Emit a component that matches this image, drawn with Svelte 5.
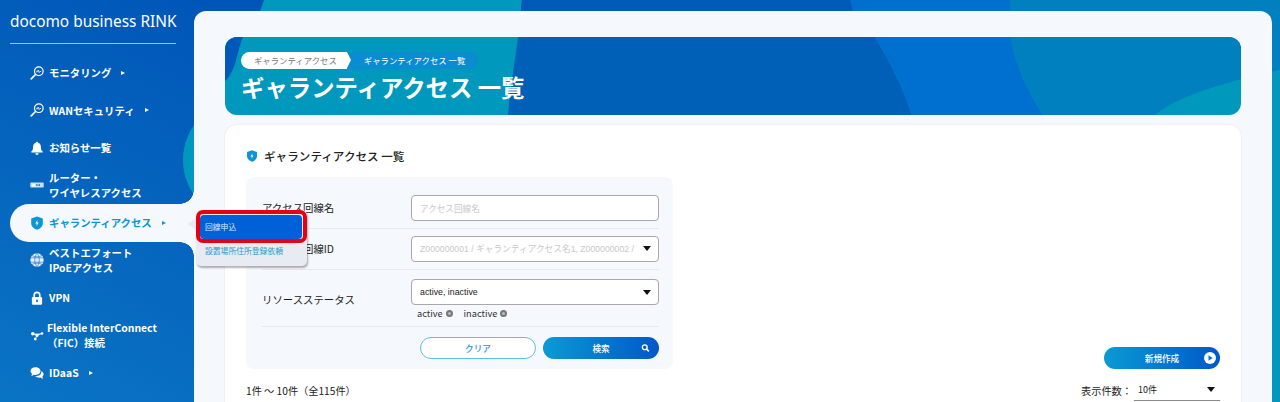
<script>
  const nav = [
    { id: 'monitor', lines: ['モニタリング'], arrow: true },
    { id: 'monitor', lines: ['WANセキュリティ'], arrow: true },
    { id: 'bell', lines: ['お知らせ一覧'] },
    { id: 'router', lines: ['ルーター・', 'ワイヤレスアクセス'] },
    { id: 'shield', lines: ['ギャランティアクセス'], arrow: true, active: true },
    { id: 'globe', lines: ['ベストエフォート', 'IPoEアクセス'] },
    { id: 'lock', lines: ['VPN'] },
    { id: 'network', lines: ['Flexible InterConnect', '（FIC）接続'], tight: true },
    { id: 'chat', lines: ['IDaaS'], arrow: true }
  ]
</script>

{#snippet icon(id)}
  <svg class="nav-icon" viewBox="0 0 14 14" fill="currentColor">
    {#if id === 'monitor'}
      <circle cx="8.800" cy="5.200" r="4.300" fill="none" stroke="currentColor" stroke-width="1.200" />
      <path d="M5.500 8.500 1.200 12.800" fill="none" stroke="currentColor" stroke-width="1.700" stroke-linecap="round" />
      <path d="M6 5.800h1.400l.8-1.800 1 2.600.7-1.100h1.200" fill="none" stroke="currentColor" stroke-width=".8" />
    {:else if id === 'bell'}
      <path d="M7 .8c.6 0 1 .4 1 1 2 .5 2.900 2.200 2.900 4.200 0 2.400.6 3.500 1.800 4.500v.9H1.300v-.9c1.200-1 1.800-2.100 1.800-4.500 0-2 .9-3.700 2.900-4.200 0-.6.4-1 1-1z" />
      <path d="M5.300 12.200h3.400a1.700 1.700 0 0 1-3.400 0z" />
    {:else if id === 'router'}
      <rect x=".3" y="4.600" width="13.400" height="5" rx=".8" opacity=".8" />
      <rect x="2" y="5.800" width="3.400" height="2.600" fill="#fff" />
      <rect x="6.200" y="6.300" width="1.400" height="1.500" fill="#0a62b8" />
      <rect x="8.600" y="6.300" width="1.400" height="1.500" fill="#0a62b8" />
    {:else if id === 'shield'}
      <path d="M7 .4 12.800 2.400v5c0 3-2.500 5.200-5.800 6.300C3.700 12.600 1.200 10.400 1.200 7.400v-5z" />
      <path d="M7.500 3.800 5.300 7.500h1.500l-.4 2.700 2.300-3.700H7.100z" fill="#fff" />
    {:else if id === 'globe'}
      <circle cx="7" cy="7" r="6.700" opacity=".9" />
      <path d="M.6 4.800h12.800M.6 9.200h12.800M7 .4c-3 3-3 10 0 13.200M7 .4c3 3 3 10 0 13.200M2 2.500c3 1.800 7 1.800 10 0M2 11.500c3-1.800 7-1.800 10 0" fill="none" stroke="#0a66b8" stroke-width=".6" />
    {:else if id === 'lock'}
      <path d="M4.200 6.500V4.200a2.800 2.800 0 0 1 5.600 0v2.300" fill="none" stroke="currentColor" stroke-width="1.600" />
      <rect x="1.900" y="6" width="10.200" height="7.800" rx="1.200" />
      <rect x="6.200" y="8.400" width="1.600" height="3" rx=".8" fill="#0a66b8" />
    {:else if id === 'network'}
      <circle cx="2.800" cy="5.800" r="1.800" />
      <circle cx="7" cy="7.500" r="1.500" />
      <circle cx="12" cy="5.500" r="1.300" />
      <circle cx="5.300" cy="11" r="1.400" />
      <path d="M3 5.800 7 7.500 12 5.500M7 7.500 5.300 11" stroke="currentColor" stroke-width=".7" />
    {:else if id === 'chat'}
      <path d="M5.500 1.300c2.800 0 5 1.700 5 3.800s-2.200 3.800-5 3.800c-.6 0-1.100-.1-1.600-.2L1.400 10.300l.6-2.500C1.100 7 .5 6.100.5 5.100.5 3 2.700 1.300 5.500 1.300z" />
      <path d="M11.300 5.200c1.400.6 2.300 1.700 2.300 3 0 .9-.5 1.800-1.300 2.400l.6 2.500-2.500-1.500c-2 .4-4.100-.2-5.100-1.500 3.200.2 6.300-1.500 6-4.900z" />
    {/if}
  </svg>
{/snippet}

<div class="page">
  <svg class="backdrop" viewBox="0 0 1280 402" preserveAspectRatio="none">
    <defs>
      <linearGradient id="bgBlue" gradientUnits="userSpaceOnUse" x1="200" y1="0" x2="0" y2="402">
        <stop offset="0" stop-color="#0056b8" />
        <stop offset="1" stop-color="#0a74c4" />
      </linearGradient>
    </defs>
    <rect width="1280" height="402" fill="url(#bgBlue)" />
    <ellipse cx="232" cy="160" rx="49" ry="55" fill="#0098bc" />
    <path d="M264 0H522L518 40H250z" fill="#0098bc" />
    <path d="M522 0H850L860 40H518z" fill="#005ab8" />
    <path d="M850 0H1010V40H860z" fill="#0070d0" />
    <path d="M1010 0H1280V72L1240 80V40H1010z" fill="#0080be" />
    <path d="M1240 78 1280 70V402H1240z" fill="#0098bc" />
  </svg>

  <aside class="sidebar">
    <div class="brand">docomo business RINK</div>
    <nav class="nav">
      {#each nav as item}
        <div class="nav-item" class:active={item.active} class:tight={item.tight}>
          {@render icon(item.id)}
          <span class="nav-text">
            {#each item.lines as line}
              <span>{line}</span>
            {/each}
          </span>
          {#if item.arrow}<i class="nav-arrow"></i>{/if}
        </div>
      {/each}
    </nav>
  </aside>

  <main class="panel">
    <header class="banner">
      <svg class="banner-art" viewBox="0 0 1016 78" preserveAspectRatio="none">
        <rect width="1016" height="78" fill="#0098bc" />
        <path d="M0 0h18C12 14 12 26 6 36 4 40 2 42 0 44z" fill="#0058b8" />
        <path d="M293 0H650C665 25 678 50 687 78H283C285 50 290 25 293 0z" fill="#0060b8" />
        <path d="M650 0H786C790 30 805 58 818 78H687C678 50 665 25 650 0z" fill="#0070d0" />
        <path d="M786 0H1016V42C990 50 955 58 930 78H818C805 58 790 30 786 0z" fill="#0080be" />
      </svg>
      <div class="crumbs">
        <span class="crumb first">ギャランティアクセス</span>
        <span class="crumb second">ギャランティアクセス 一覧</span>
      </div>
      <h1>ギャランティアクセス 一覧</h1>
    </header>

    <section class="card">
      <h2>
        <svg class="head-icon" viewBox="0 0 14 14">
          <path d="M7 .4 12.800 2.400v5c0 3-2.500 5.200-5.800 6.300C3.700 12.600 1.200 10.400 1.200 7.400v-5z" fill="#0a96d4" />
          <path d="M7.500 3.800 5.300 7.500h1.500l-.4 2.700 2.300-3.700H7.100z" fill="#fff" />
        </svg>
        ギャランティアクセス 一覧
      </h2>

      <div class="actions-row">
        <form class="search">
          <div class="row">
            <span class="label">アクセス回線名</span>
            <div class="control"><div class="input placeholder">アクセス回線名</div></div>
          </div>
          <div class="row">
            <span class="label">アクセス回線ID</span>
            <div class="control">
              <div class="input select placeholder latin">
                <span class="clip">Z000000001 / ギャランティアクセス名1, Z000000002 / :</span>
                <i class="caret"></i>
              </div>
            </div>
          </div>
          <div class="row tall">
            <span class="label">リソースステータス</span>
            <div class="control">
              <div class="input select latin value"><span class="clip">active, inactive</span><i class="caret"></i></div>
              <div class="tags">
                <span class="tag">active <i class="x"></i></span>
                <span class="tag">inactive <i class="x"></i></span>
              </div>
            </div>
          </div>
          <div class="buttons">
            <button type="button" class="btn ghost">クリア</button>
            <button type="button" class="btn primary">
              検索
              <svg class="btn-icon search-icon" viewBox="0 0 12 12" fill="none" stroke="#fff">
                <circle cx="5" cy="5" r="3.200" stroke-width="1.800" />
                <path d="M7.500 7.500 10.500 10.500" stroke-width="2" />
              </svg>
            </button>
          </div>
        </form>
        <button type="button" class="btn primary create">
          新規作成
          <svg class="btn-icon play-icon" viewBox="0 0 12 12">
            <circle cx="6" cy="6" r="6" fill="#fff" />
            <path d="M4.500 3.300 8.700 6 4.500 8.700z" fill="#0a70d0" />
          </svg>
        </button>
      </div>

      <div class="list-meta">
        <span>1件 〜 10件（全115件）</span>
        <div class="per-page">
          <span>表示件数：</span>
          <div class="per-select">10件<i class="caret"></i></div>
        </div>
      </div>
    </section>
  </main>

  <div class="popover">
    <a class="pop-item current" href="#apply">回線申込</a>
    <a class="pop-item" href="#address">設置場所住所登録依頼</a>
    <div class="highlight"></div>
  </div>
</div>

<style>
  :global(body) {
    margin: 0;
  }

  .page {
    position: relative;
    display: flex;
    height: 402px;
    overflow: hidden;
    font-family: "Noto Sans CJK JP", "Noto Sans", sans-serif;
    color: #222;
  }

  .backdrop {
    position: absolute;
    inset: 0;
    width: 100%;
    height: 100%;
  }

  .sidebar {
    position: relative;
    flex: 0 0 194px;
    width: 194px;
    min-width: 0;
    color: #fff;
  }

  .brand {
    margin: 0 18px 0 10px;
    height: 32px;
    padding-top: 11px;
    border-bottom: 1px solid #9cc4ea;
    font-family: "Noto Sans", sans-serif;
    font-size: 15.4px;
    line-height: 22px;
    white-space: nowrap;
  }

  .nav {
    margin-top: 10px;
  }

  .nav-item {
    position: relative;
    display: flex;
    align-items: center;
    gap: 5px;
    height: 37.5px;
    padding-left: 30px;
    font-size: 10.4px;
    font-weight: 700;
    line-height: 15px;
  }

  .nav-item.tight {
    gap: 3px;
  }

  .nav-item.active {
    margin-left: 10px;
    padding-left: 20px;
    background: #f5f8fc;
    border-radius: 19px 0 0 19px;
    color: #0a96d4;
  }

  .nav-item.active::before,
  .nav-item.active::after {
    content: "";
    position: absolute;
    right: 0;
    width: 14px;
    height: 14px;
  }

  .nav-item.active::before {
    top: -14px;
    background: radial-gradient(circle at 0 0, transparent 13.5px, #f5f8fc 14px);
  }

  .nav-item.active::after {
    bottom: -14px;
    background: radial-gradient(circle at 0 100%, transparent 13.5px, #f5f8fc 14px);
  }

  .nav-icon {
    flex: 0 0 14px;
    width: 14px;
    height: 14px;
  }

  .nav-text span {
    display: block;
    white-space: nowrap;
  }

  .nav-arrow {
    width: 0;
    height: 0;
    margin-left: 5px;
    border-left: 4px solid currentColor;
    border-top: 2.5px solid transparent;
    border-bottom: 2.5px solid transparent;
  }

  .panel {
    position: relative;
    flex: 1;
    margin: 11px 8px 0 0;
    padding: 26px 31px;
    min-width: 0;
    background: #f5f8fc;
    border-radius: 12px 12px 0 0;
  }

  .banner {
    position: relative;
    height: 78px;
    padding: 15px 16px 0;
    box-sizing: border-box;
    border-radius: 12px;
    overflow: hidden;
  }

  .banner-art {
    position: absolute;
    inset: 0;
    width: 100%;
    height: 100%;
  }

  .crumbs {
    position: relative;
    display: flex;
    font-size: 8.4px;
    line-height: 17px;
  }

  .crumb {
    height: 17px;
    white-space: nowrap;
  }

  .crumb.first {
    position: relative;
    z-index: 1;
    padding: 0 10px 0 13px;
    background: #fff;
    border-radius: 9px 0 0 9px;
    color: #777;
  }

  .crumb.first::after {
    content: "";
    position: absolute;
    left: 100%;
    top: 0;
    border-left: 4px solid #fff;
    border-top: 8.5px solid transparent;
    border-bottom: 8.5px solid transparent;
  }

  .crumb.second {
    padding: 0 13px 0 17px;
    background: #0a8cd0;
    border-radius: 0 9px 9px 0;
    color: #fff;
  }

  h1 {
    position: relative;
    margin: 0;
    font-size: 23.4px;
    font-weight: 700;
    line-height: 36px;
    color: #fff;
    white-space: nowrap;
  }

  .card {
    margin-top: 10px;
    padding: 21px 21px 0;
    height: 300px;
    background: #fff;
    border-radius: 12px;
    box-shadow: 0 0 2px rgba(120, 140, 170, 0.2);
  }

  h2 {
    display: flex;
    align-items: center;
    gap: 6px;
    margin: 0;
    height: 20px;
    font-size: 11.6px;
    font-weight: 500;
    color: #222;
  }

  .head-icon {
    width: 12px;
    height: 14px;
  }

  .actions-row {
    display: flex;
    align-items: flex-end;
    justify-content: space-between;
    margin-top: 11px;
  }

  .search {
    width: 427px;
    box-sizing: border-box;
    padding: 10.5px 14px 10px 16px;
    background: #f5f8fc;
    border-radius: 8px;
  }

  .row {
    display: flex;
    align-items: center;
    height: 41.25px;
    border-bottom: 1px solid #e6eaef;
    box-sizing: border-box;
  }

  .row.tall {
    height: 57px;
    align-items: flex-start;
    padding-top: 9px;
  }

  .row.tall .label {
    align-self: center;
    margin-top: -6px;
  }

  .label {
    flex: 0 0 149px;
    font-size: 10.4px;
    font-weight: 400;
    white-space: nowrap;
  }

  .control {
    flex: 1;
    min-width: 0;
  }

  .input {
    display: flex;
    align-items: center;
    height: 26px;
    box-sizing: border-box;
    padding: 0 7px 0 8px;
    background: #fff;
    border: 1px solid #a8a8a8;
    border-radius: 4px;
    font-size: 8.6px;
  }

  .input.latin {
    font-family: "Liberation Sans", "Noto Sans CJK JP", sans-serif;
    font-size: 8.7px;
  }

  .input.value {
    color: #222;
    font-size: 8.8px;
  }

  .placeholder {
    color: #c8c8c8;
  }

  .clip {
    flex: 1;
    min-width: 0;
    overflow: hidden;
    white-space: nowrap;
  }

  .caret {
    flex: none;
    width: 0;
    height: 0;
    margin-left: 8px;
    border-top: 5px solid #111;
    border-left: 4px solid transparent;
    border-right: 4px solid transparent;
  }

  .tags {
    display: flex;
    gap: 11px;
    padding: 1px 0 0 6px;
    font-size: 9.2px;
    line-height: 14px;
  }

  .tag {
    display: flex;
    align-items: center;
    gap: 3px;
    color: #333;
  }

  .x {
    position: relative;
    width: 7px;
    height: 7px;
    border-radius: 50%;
    background: #777;
  }

  .x::after {
    content: "";
    position: absolute;
    inset: 2px;
    border-radius: 50%;
    background: #bbb;
  }

  .buttons {
    display: flex;
    justify-content: flex-end;
    gap: 7px;
    padding-top: 9.5px;
  }

  .btn {
    position: relative;
    width: 116px;
    height: 22px;
    padding: 0;
    box-sizing: border-box;
    border: 0;
    border-radius: 11px;
    font-family: inherit;
    font-size: 8.6px;
    font-weight: 500;
  }

  .ghost {
    background: #fff;
    border: 1px solid #5cc0e8;
    color: #1a9ad0;
  }

  .primary {
    background: linear-gradient(90deg, #0a9ad4, #0058c8);
    color: #fff;
  }

  .btn-icon {
    position: absolute;
    top: 50%;
    transform: translateY(-50%);
  }

  .search-icon {
    right: 9px;
    width: 9px;
    height: 9px;
  }

  .play-icon {
    right: 4px;
    width: 12px;
    height: 12px;
  }

  .list-meta {
    display: flex;
    align-items: center;
    justify-content: space-between;
    margin-top: 13px;
    font-size: 10.2px;
    line-height: 16px;
  }

  .per-page {
    display: flex;
    align-items: center;
    gap: 2px;
  }

  .per-select {
    display: flex;
    align-items: center;
    justify-content: space-between;
    width: 86px;
    box-sizing: border-box;
    padding: 0 5px 2px 4px;
    border-bottom: 1px solid #888;
    font-size: 9px;
  }

  .popover {
    position: absolute;
    z-index: 2;
    left: 196px;
    top: 210px;
    display: flex;
    flex-direction: column;
    width: 111px;
    height: 56px;
    box-sizing: border-box;
    padding: 5px 5px 0 4px;
    background: #e8ebf2;
    border-radius: 5px;
    box-shadow: 1px 2px 2px rgba(0, 0, 0, 0.3);
  }

  .popover::before {
    content: "";
    position: absolute;
    right: 100%;
    top: 8px;
    border-right: 8px solid #e8ebf2;
    border-top: 6px solid transparent;
    border-bottom: 6px solid transparent;
  }

  .pop-item {
    height: 26px;
    padding-left: 5px;
    font-size: 7.8px;
    line-height: 24px;
    color: #2a9ad0;
    text-decoration: none;
    white-space: nowrap;
  }

  .pop-item.current {
    height: 24px;
    background: #0060d8;
    border-radius: 4px;
    color: #d8ecfb;
  }

  .highlight {
    position: absolute;
    left: 0;
    top: 0;
    width: 111px;
    height: 33px;
    box-sizing: border-box;
    border: 4px solid #e60012;
    border-radius: 7px;
  }
</style>
